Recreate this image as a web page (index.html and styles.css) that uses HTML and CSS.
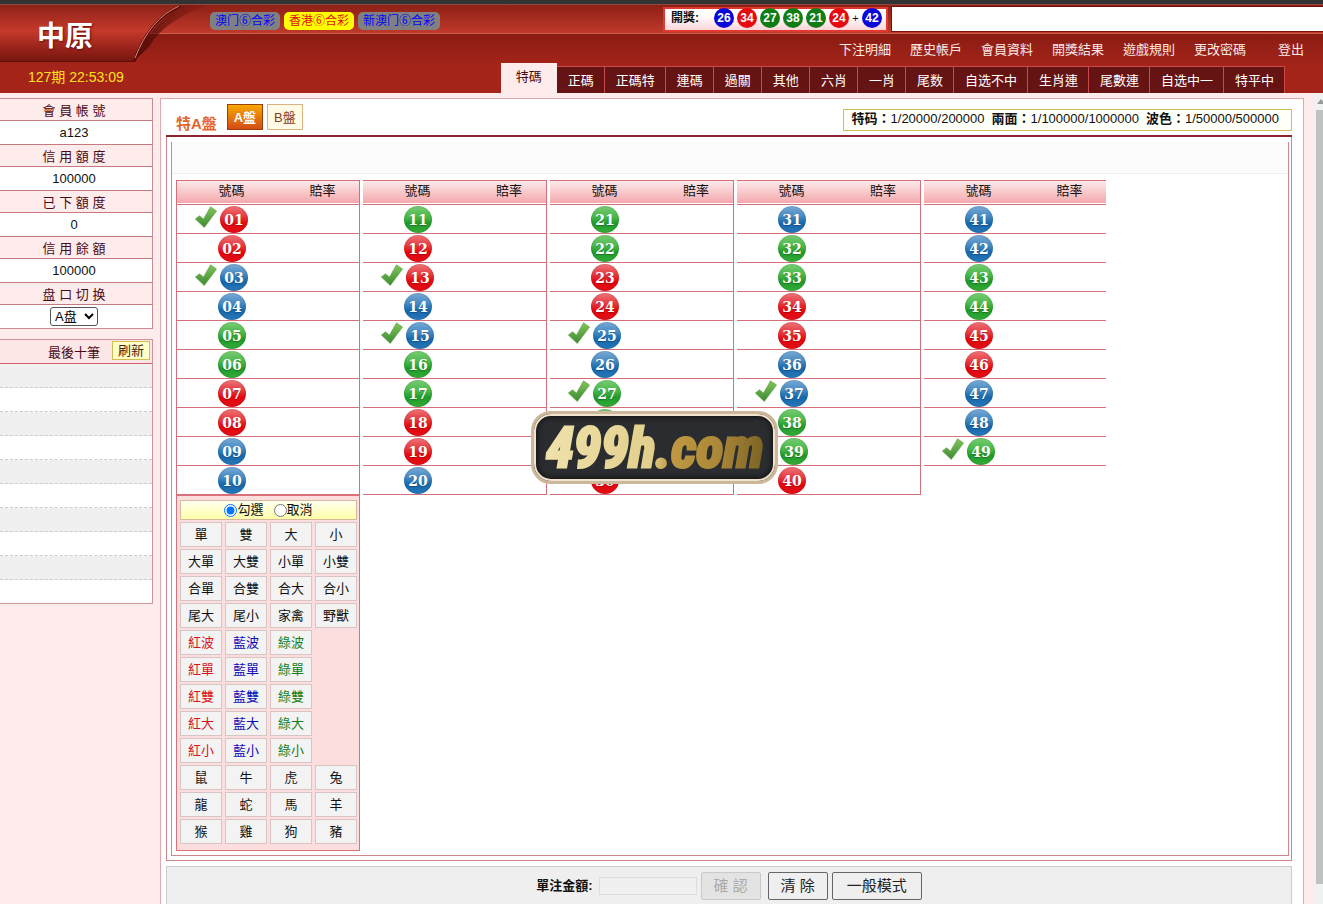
FILE: index.html
```html
<!DOCTYPE html>
<html lang="zh-Hant">
<head>
<meta charset="utf-8">
<title>中原</title>
<link rel="stylesheet" href="styles.css">
</head>
<body>
<svg class="defs" aria-hidden="true">
  <defs>
    <linearGradient id="tickFill" x1="0" y1="0" x2="0" y2="1"><stop offset="0" stop-color="#83c45a"/><stop offset="1" stop-color="#3c8a35"/></linearGradient>
    <linearGradient id="brandFill" x1="0" y1="0" x2="0" y2="1"><stop offset="0" stop-color="#8d2219"/><stop offset=".45" stop-color="#c53a2b"/><stop offset=".8" stop-color="#922018"/><stop offset="1" stop-color="#73160f"/></linearGradient>
    <linearGradient id="brandShade" x1="0" y1="0" x2="1" y2="0"><stop offset="0" stop-color="#4d0a06" stop-opacity=".9"/><stop offset="1" stop-color="#4d0a06" stop-opacity="0"/></linearGradient>
    <linearGradient id="gold" gradientUnits="userSpaceOnUse" x1="12" y1="0" x2="230" y2="20"><stop offset="0" stop-color="#efe2ab"/><stop offset=".5" stop-color="#e2cf8c"/><stop offset=".58" stop-color="#c09a42"/><stop offset=".8" stop-color="#ab8838"/><stop offset="1" stop-color="#7d6426"/></linearGradient>
    <symbol id="tick" viewBox="0 0 22 22"><path d="M0.3 13 4.5 9.8 8.5 13 15.5 0.8 21.6 5 9.3 21.5 Z" fill="url(#tickFill)" stroke="#5ca544" stroke-width=".6" stroke-linejoin="round"/></symbol>
  </defs>
</svg>
<header class="header">
  <div class="strip"></div>
  <div class="topbar">
    <nav class="lotteries">
      <a class="lottery" href="#">澳门⑥合彩</a>
      <a class="lottery active" href="#">香港⑥合彩</a>
      <a class="lottery" href="#">新澳门⑥合彩</a>
    </nav>
    <div class="draw"><b>開獎:</b>
      <span class="num blue">26</span><span class="num red">34</span><span class="num green">27</span><span class="num green">38</span><span class="num green">21</span><span class="num red">24</span><span class="plus">+</span><span class="num blue">42</span>
    </div>
    <div class="notice"></div>
  </div>
  <nav class="menu">
    <a href="#">下注明細</a><a href="#">歷史帳戶</a><a href="#">會員資料</a><a href="#">開獎結果</a><a href="#">遊戲規則</a><a href="#">更改密碼</a><a href="#">登出</a>
  </nav>
  <div class="tabrow">
    <span class="period">127期 22:53:09</span>
    <nav class="tabs">
      <a class="tab current" href="#">特碼</a><a class="tab" href="#">正碼</a><a class="tab" href="#">正碼特</a><a class="tab" href="#">連碼</a><a class="tab" href="#">過關</a><a class="tab" href="#">其他</a><a class="tab" href="#">六肖</a><a class="tab" href="#">一肖</a><a class="tab" href="#">尾数</a><a class="tab" href="#">自选不中</a><a class="tab" href="#">生肖連</a><a class="tab" href="#">尾數連</a><a class="tab" href="#">自选中一</a><a class="tab" href="#">特平中</a>
    </nav>
  </div>
  <div class="brand">
    <svg class="brand-bg" viewBox="0 0 210 57" aria-hidden="true">
      <path d="M133 57 Q150 20 182 0 H210 Q165 14 149 42 Z" fill="url(#brandShade)"/>
      <path d="M0 0H180Q150 12 133 57H0Z" fill="url(#brandFill)"/>
      <path d="M0 56.5H134" stroke="#5a0f0a"/>
      <path d="M134 57Q148 16 180 1" fill="none" stroke="#5f0e09" stroke-width="3"/>
      <path d="M135 53Q150 14 179 1" fill="none" stroke="#d98a78" stroke-width="1"/>
    </svg>
    <h1>中原</h1>
  </div>
</header>
<div class="main">
  <aside class="sidebar">
    <dl class="account">
      <dt>會 員 帳 號</dt><dd>a123</dd>
      <dt>信 用 額 度</dt><dd>100000</dd>
      <dt>已 下 額 度</dt><dd>0</dd>
      <dt>信 用 餘 額</dt><dd>100000</dd>
      <dt><label for="pan">盘 口 切 换</label></dt><dd><select id="pan"><option>A盘</option><option>B盘</option></select></dd>
    </dl>
    <section class="recent">
      <div class="recent-head"><span>最後十筆</span><button type="button">刷新</button></div>
      <ul><li></li><li></li><li></li><li></li><li></li><li></li><li></li><li></li><li></li><li></li></ul>
    </section>
  </aside>
  <main class="frame">
    <div class="titlebar">
      <h2>特A盤</h2>
      <button type="button" class="pan on">A盤</button>
      <button type="button" class="pan">B盤</button>
      <p class="limits"><span><b>特码：</b>1/20000/200000</span><span><b>兩面：</b>1/100000/1000000</span><span><b>波色：</b>1/50000/500000</span></p>
    </div>
    <div class="board">
      <div class="board-in">
        <div class="blank"></div>
        <div class="columns">
          <div class="column">
            <table class="odds first">
              <thead><tr><th>號碼</th><th>賠率</th></tr></thead>
              <tbody>
                <tr><td><svg class="tick"><use href="#tick"/></svg><span class="ball r">01</span></td><td></td></tr>
                <tr><td><span class="ball r">02</span></td><td></td></tr>
                <tr><td><svg class="tick"><use href="#tick"/></svg><span class="ball b">03</span></td><td></td></tr>
                <tr><td><span class="ball b">04</span></td><td></td></tr>
                <tr><td><span class="ball g">05</span></td><td></td></tr>
                <tr><td><span class="ball g">06</span></td><td></td></tr>
                <tr><td><span class="ball r">07</span></td><td></td></tr>
                <tr><td><span class="ball r">08</span></td><td></td></tr>
                <tr><td><span class="ball b">09</span></td><td></td></tr>
                <tr><td><span class="ball b">10</span></td><td></td></tr>
              </tbody>
            </table>
            <section class="quick">
              <div class="mode">
                <label><input type="radio" name="mode" checked>勾選</label>
                <label><input type="radio" name="mode">取消</label>
              </div>
              <div class="keys">
                <button type="button">單</button><button type="button">雙</button><button type="button">大</button><button type="button">小</button>
                <button type="button">大單</button><button type="button">大雙</button><button type="button">小單</button><button type="button">小雙</button>
                <button type="button">合單</button><button type="button">合雙</button><button type="button">合大</button><button type="button">合小</button>
                <button type="button">尾大</button><button type="button">尾小</button><button type="button">家禽</button><button type="button">野獸</button>
                <button type="button" class="kr">紅波</button><button type="button" class="kb">藍波</button><button type="button" class="kg">綠波</button>
                <button type="button" class="kr">紅單</button><button type="button" class="kb">藍單</button><button type="button" class="kg">綠單</button>
                <button type="button" class="kr">紅雙</button><button type="button" class="kb">藍雙</button><button type="button" class="kg">綠雙</button>
                <button type="button" class="kr">紅大</button><button type="button" class="kb">藍大</button><button type="button" class="kg">綠大</button>
                <button type="button" class="kr">紅小</button><button type="button" class="kb">藍小</button><button type="button" class="kg">綠小</button>
                <button type="button" class="lead">鼠</button><button type="button">牛</button><button type="button">虎</button><button type="button">兔</button>
                <button type="button">龍</button><button type="button">蛇</button><button type="button">馬</button><button type="button">羊</button>
                <button type="button">猴</button><button type="button">雞</button><button type="button">狗</button><button type="button">豬</button>
              </div>
            </section>
          </div>
          <div class="column">
            <table class="odds">
              <thead><tr><th>號碼</th><th>賠率</th></tr></thead>
              <tbody>
                <tr><td><span class="ball g">11</span></td><td></td></tr>
                <tr><td><span class="ball r">12</span></td><td></td></tr>
                <tr><td><svg class="tick"><use href="#tick"/></svg><span class="ball r">13</span></td><td></td></tr>
                <tr><td><span class="ball b">14</span></td><td></td></tr>
                <tr><td><svg class="tick"><use href="#tick"/></svg><span class="ball b">15</span></td><td></td></tr>
                <tr><td><span class="ball g">16</span></td><td></td></tr>
                <tr><td><span class="ball g">17</span></td><td></td></tr>
                <tr><td><span class="ball r">18</span></td><td></td></tr>
                <tr><td><span class="ball r">19</span></td><td></td></tr>
                <tr><td><span class="ball b">20</span></td><td></td></tr>
              </tbody>
            </table>
          </div>
          <div class="column">
            <table class="odds">
              <thead><tr><th>號碼</th><th>賠率</th></tr></thead>
              <tbody>
                <tr><td><span class="ball g">21</span></td><td></td></tr>
                <tr><td><span class="ball g">22</span></td><td></td></tr>
                <tr><td><span class="ball r">23</span></td><td></td></tr>
                <tr><td><span class="ball r">24</span></td><td></td></tr>
                <tr><td><svg class="tick"><use href="#tick"/></svg><span class="ball b">25</span></td><td></td></tr>
                <tr><td><span class="ball b">26</span></td><td></td></tr>
                <tr><td><svg class="tick"><use href="#tick"/></svg><span class="ball g">27</span></td><td></td></tr>
                <tr><td><span class="ball g">28</span></td><td></td></tr>
                <tr><td><span class="ball r">29</span></td><td></td></tr>
                <tr><td><span class="ball r">30</span></td><td></td></tr>
              </tbody>
            </table>
          </div>
          <div class="column">
            <table class="odds">
              <thead><tr><th>號碼</th><th>賠率</th></tr></thead>
              <tbody>
                <tr><td><span class="ball b">31</span></td><td></td></tr>
                <tr><td><span class="ball g">32</span></td><td></td></tr>
                <tr><td><span class="ball g">33</span></td><td></td></tr>
                <tr><td><span class="ball r">34</span></td><td></td></tr>
                <tr><td><span class="ball r">35</span></td><td></td></tr>
                <tr><td><span class="ball b">36</span></td><td></td></tr>
                <tr><td><svg class="tick"><use href="#tick"/></svg><span class="ball b">37</span></td><td></td></tr>
                <tr><td><span class="ball g">38</span></td><td></td></tr>
                <tr><td><svg class="tick"><use href="#tick"/></svg><span class="ball g">39</span></td><td></td></tr>
                <tr><td><span class="ball r">40</span></td><td></td></tr>
              </tbody>
            </table>
          </div>
          <div class="column">
            <table class="odds last">
              <thead><tr><th>號碼</th><th>賠率</th></tr></thead>
              <tbody>
                <tr><td><span class="ball b">41</span></td><td></td></tr>
                <tr><td><span class="ball b">42</span></td><td></td></tr>
                <tr><td><span class="ball g">43</span></td><td></td></tr>
                <tr><td><span class="ball g">44</span></td><td></td></tr>
                <tr><td><span class="ball r">45</span></td><td></td></tr>
                <tr><td><span class="ball r">46</span></td><td></td></tr>
                <tr><td><span class="ball b">47</span></td><td></td></tr>
                <tr><td><span class="ball b">48</span></td><td></td></tr>
                <tr><td><svg class="tick"><use href="#tick"/></svg><span class="ball g">49</span></td><td></td></tr>
              </tbody>
            </table>
          </div>
        </div>
      </div>
    </div>
    <form class="betbar">
      <label for="amount">單注金額:</label>
      <input id="amount" type="text" disabled>
      <button type="button" disabled>確 認</button>
      <button type="button" class="clear">清 除</button>
      <button type="button" class="normal">一般模式</button>
    </form>
  </main>
  <div class="scroll"><span class="arrow"></span><span class="thumb"></span></div>
</div>
<div class="badge"><svg viewBox="0 0 241 67"><text class="badge-text" x="121" y="53" text-anchor="middle">499h.com</text></svg></div>
</body>
</html>
```
FILE: styles.css
```css
* { box-sizing: border-box; }
body, h1, h2, p, dl, dd, ul { margin: 0; padding: 0; }
body {
  display: flex;
  flex-direction: column;
  height: 100vh;
  overflow: hidden;
  position: relative;
  background: #feecec;
  color: #111;
  font: 13px/18px "Liberation Sans", "Noto Sans CJK TC", sans-serif;
}
a { color: inherit; text-decoration: none; white-space: nowrap; }
button, input, select { font: inherit; }
button { padding: 0; border-radius: 0; }
.defs { position: absolute; width: 0; height: 0; }

.header { position: relative; flex: none; background: linear-gradient(#8a1c13 34px, #a52419 66px); }
.strip { height: 4px; background: #333; }
.topbar {
  display: flex;
  align-items: center;
  height: 30px;
  padding-left: 210px;
  border-top: 1px solid #8d4a44;
  border-bottom: 1px solid #c9604e;
  background: linear-gradient(#8e2016, #c0392b);
}
.lotteries { display: flex; gap: 4px; margin-top: 3px; }
.lottery { padding: 0 5px; border-radius: 5px; background: #808080; color: #00f; font-size: 12px; }
.lottery.active { background: #ff0; color: #e01010; }
.draw {
  display: flex;
  align-items: center;
  gap: 3px;
  width: 225px;
  height: 25px;
  margin-left: auto;
  padding: 0 0 2px 6px;
  border: 2px solid #e03a30;
  background: linear-gradient(#fff 30%, #fbd5d9);
  font-size: 12px;
}
.draw b { width: 40px; }
.num { width: 20px; height: 20px; border-radius: 50%; color: #fff; font-weight: bold; line-height: 20px; text-align: center; }
.num.blue { background: #0808d8; }
.num.red { background: #e60a0e; }
.num.green { background: #0f7d14; }
.plus { width: 7px; font-size: 11px; text-align: center; }
.notice { flex: none; width: 432px; height: 26px; margin-left: 3px; border: 1px solid #7c0c08; border-right: 0; background: #fff; }

.menu { display: flex; justify-content: flex-end; gap: 19px; height: 29px; padding: 7px 6px 0 0; color: #fbe9e6; }
.menu a { min-width: 52px; text-align: center; }
.tabrow { display: flex; align-items: flex-end; justify-content: space-between; height: 30px; padding: 0 38px 0 28px; }
.period { color: #ffe11c; font-size: 14px; line-height: 32px; }
.tabs { display: flex; align-items: flex-end; }
.tab { height: 27px; padding: 0 10px 0 11px; border-top: 1px solid #c84a4c; border-right: 1px solid #c84a4c; background: #651313; color: #fff; line-height: 27px; }
.tab.current { height: 30px; padding: 0 15px; border: 0; background: #feecec; color: #4a0a0a; line-height: 28px; }
.brand { position: absolute; left: 0; top: 5px; width: 210px; height: 57px; }
.brand-bg { position: absolute; left: 0; top: 0; width: 210px; height: 57px; }
.brand h1 { position: relative; padding-left: 37px; color: #fff; font-size: 28px; line-height: 64px; text-shadow: 1px 1px 2px #6a0d08; }

.main { display: flex; flex: 1; min-height: 0; padding-top: 5px; }
.sidebar { flex: none; width: 153px; }
.account { border: 1px solid #c98a90; border-left: 0; text-align: center; }
.account dt { height: 22px; padding-right: 4px; border-bottom: 1px solid #c57a80; color: #4a0a14; line-height: 24px; }
.account dd { height: 24px; padding-right: 4px; border-bottom: 1px solid #c57a80; background: #fff; line-height: 23px; }
.account dd:last-child { height: 23px; border-bottom: 0; }
.account select { width: 48px; height: 19px; padding: 0; border: 1px solid #555; border-radius: 3px; background: #fff; }
.recent { margin-top: 10px; border: 1px solid #d0959b; border-left: 0; background: #fff; }
.recent-head { display: flex; justify-content: flex-end; gap: 12px; height: 24px; padding: 1px 2px 0 0; border-bottom: 1px solid #d0606a; background: #fce6e6; color: #4a0a14; }
.recent-head span { line-height: 24px; }
.recent-head button { width: 38px; height: 19px; border: 1px solid #cfbf52; background: #ffffc8; color: #4a1a10; line-height: 16px; }
.recent ul { list-style: none; }
.recent li { height: 24px; border-bottom: 1px dashed #ccc; }
.recent li:last-child { height: 23px; border-bottom: 0; }
.recent li:nth-child(odd) { background: #f0f0f0; }

.frame { flex: 1; min-width: 0; margin: 0 9px 0 7px; padding: 0 11px 0 5px; border: 1px solid #dda9b0; border-bottom: 0; background: #fff; overflow: hidden; }
.titlebar { display: flex; align-items: flex-start; gap: 4px; height: 38px; padding: 5px 0 0 10px; border-bottom: 2px solid #8c2430; }
.titlebar h2 { margin-right: 6px; color: #e4652c; font-size: 15px; line-height: 39px; }
.pan { width: 36px; height: 26px; border: 1px solid #d9b183; background: #fffbe6; color: #8a3a20; line-height: 26px; }
.pan.on { border-color: #96420a; background: linear-gradient(#f9a800, #d24c14); color: #fff; font-weight: bold; }
.limits { display: flex; gap: 7px; margin: 5px 0 0 auto; padding: 0 12px 2px 8px; border: 1px solid #cdbf55; background: #fffffa; white-space: nowrap; }
.board { padding: 5px 2px 4px 4px; border: 1px solid #d0868a; border-top: 0; }
.board-in { padding-bottom: 4px; border: 1px solid #d0868a; border-top: 0; }
.blank { height: 32px; border-bottom: 1px solid #eee; background: #fcfcfc; }
.columns { display: flex; align-items: flex-start; gap: 3px; padding: 6px 0 0 4px; }
.column { flex: none; width: 184px; }
.odds { width: 184px; border-collapse: separate; border-spacing: 0; table-layout: fixed; border-right: 1px solid #d5707a; }
.odds.first { border-left: 1px solid #d5707a; }
.odds.last { width: 182px; border-right: 0; }
.odds th { height: 25px; padding: 0 0 4px; border: solid #d5707a; border-width: 1px 0; background: linear-gradient(#fdeaea, #f4a8ad 22px, #fff 22px); font-weight: normal; line-height: 18px; }
.odds th:first-child { width: 109px; }
.odds td { height: 29px; padding: 0; border-bottom: 1px solid #d5707a; line-height: 0; }
.tick { width: 22px; height: 22px; margin: 0 3px 5px 18px; vertical-align: middle; }
.ball {
  display: inline-block;
  width: 28px;
  height: 27px;
  margin-left: 41px;
  border-radius: 50%;
  color: #fff;
  font: bold 14px/28px "DejaVu Serif", serif;
  text-align: center;
  text-shadow: 0 1px 1px #0004;
  vertical-align: middle;
}
.tick + .ball { margin-left: 0; }
.ball.r { background: linear-gradient(#ee7478, #e4383e 40%, #e6050d 65%, #e01018); }
.ball.b { background: linear-gradient(#7aaad6, #4388c0 40%, #1668ac 65%, #2878b8); }
.ball.g { background: linear-gradient(#78cc74, #4ab84a 40%, #1f9a2a 65%, #34ac38); }
.ball.r, .ball.b, .ball.g { box-shadow: inset 0 0 2px #0003; }

.quick { padding: 4px 2px 6px 3px; border: 1px solid #dd7078; background: #fddede; }
.mode { display: flex; justify-content: center; gap: 10px; height: 20px; margin-bottom: 2px; border: 1px solid #d8b9a0; background: linear-gradient(#fffff0, #ffffa8); }
.mode label { display: flex; align-items: center; }
.mode input { width: 13px; height: 13px; margin: 0; }
.keys { display: grid; grid-template-columns: repeat(4, 42px); grid-auto-rows: 25px; gap: 2px 3px; }
.keys button { padding-top: 1px; border: 1px solid #d9c4c4; background: #f4f3f3; color: #111; }
.keys .kr, .keys .lead { grid-column: 1; }
.keys .kr { color: #d8141c; }
.keys .kb { color: #0a0ab8; }
.keys .kg { color: #12801c; }

.betbar { display: flex; align-items: center; justify-content: center; height: 40px; margin-top: 5px; border: 1px solid #ccc; background: #efefef; }
.betbar label { margin-right: 6px; font-weight: bold; }
.betbar input { width: 98px; height: 18px; margin-right: 4px; padding: 0; border: 1px solid #ddd; background: #f0f0f0; }
.betbar button { width: 60px; height: 28px; border: 1px solid #666; border-radius: 2px; background: #efefef; color: #222; font-size: 15px; }
.betbar button:disabled { border-color: #c9c9c9; background: #e3e3e3; color: #aaa; }
.betbar .clear { margin: 0 4px 0 7px; }
.betbar .normal { width: 90px; }

.scroll { display: flex; flex-direction: column; flex: none; width: 10px; margin-top: -5px; padding-left: 3px; background: #f1f1f1; }
.arrow { width: 0; height: 0; margin: 6px 0 6px 1px; border: 4px solid transparent; border-top: 0; border-bottom: 5px solid #999; }
.thumb { flex: 1; margin-bottom: 20px; background: #c1c1c1; }

.badge {
  position: absolute;
  left: 531px;
  top: 411px;
  width: 247px;
  height: 73px;
  border: 3px solid #cdb79b;
  border-radius: 20px;
  background: #2b2c30;
  box-shadow: inset 0 0 0 2px #f0e2cc, inset 0 0 5px 3px #111;
}
.badge svg { display: block; width: 100%; height: 100%; }
.badge-text {
  fill: url(#gold);
  stroke: url(#gold);
  stroke-width: 3px;
  font: italic bold 56px "Liberation Sans Narrow", "Roboto Condensed", "Liberation Sans", sans-serif;
}
```
